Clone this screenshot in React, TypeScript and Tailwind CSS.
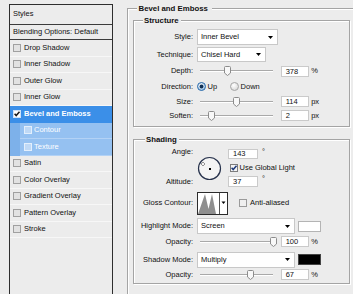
import React from "react";

function Box({
  checked = false,
  fill = "#e2e2e2",
  stroke = "#a0a0a0",
  mark = "#111",
}: {
  checked?: boolean;
  fill?: string;
  stroke?: string;
  mark?: string;
}) {
  return (
    <svg width="8" height="8" viewBox="0 0 8 8" className="shrink-0 block">
      <rect x="0.5" y="0.5" width="7" height="7" fill={fill} stroke={stroke} />
      {checked && (
        <path d="M1.6 3.8 L3.2 5.6 L6.5 1.8" fill="none" stroke={mark} strokeWidth="1.5" />
      )}
    </svg>
  );
}

type Kind = "normal" | "active" | "sub";

function StyleRow({ label, kind = "normal", checked = false }: { label: string; kind?: Kind; checked?: boolean }) {
  if (kind === "sub") {
    return (
      <div className="h-[16.5px] flex">
        <div className="w-[10px] bg-[#7db1ea]" />
        <div className="flex-1 bg-[#95c1f1] flex items-center pl-[4px] gap-[2px] text-white border-b border-[#b3d2f5]">
          <Box fill="#bfd9f6" stroke="#e3effc" />
          <span>{label}</span>
        </div>
      </div>
    );
  }
  if (kind === "active") {
    return (
      <div className="h-[16.5px] flex items-center pl-[3px] gap-[3px] bg-[#3b8fe8] text-white font-bold">
        <Box checked fill="#ffffff" stroke="#cfe2f8" mark="#1a1a1a" />
        <span>{label}</span>
      </div>
    );
  }
  return (
    <div className="h-[16.5px] flex items-center pl-[3px] gap-[3px] border-b border-[#f7f7f7]">
      <Box checked={checked} />
      <span>{label}</span>
    </div>
  );
}

function Arrow() {
  return (
    <svg width="5" height="3" viewBox="0 0 5 3" className="block shrink-0">
      <path d="M0 0 H5 L2.5 3 Z" fill="#000" />
    </svg>
  );
}

function Drop({ text, w, h = "h-[16px]" }: { text: string; w: string; h?: string }) {
  return (
    <div className={`${w} ${h} bg-white border border-[#c8c8c8] flex items-center justify-between pl-[3px] pr-[4px]`}>
      <span>{text}</span>
      <Arrow />
    </div>
  );
}

function Field({ v, w = "w-[28px]", h = "h-[11px]" }: { v: string; w?: string; h?: string }) {
  return (
    <div className={`${w} ${h} bg-white border border-[#cacaca] flex items-center pl-[4px] leading-none`}>{v}</div>
  );
}

function Slider({ pos }: { pos: number }) {
  return (
    <div className="relative w-[73px] h-[10px] ml-[3px] shrink-0">
      <div className="absolute left-0 right-0 top-[4px] h-px bg-[#a9a9a9]" />
      <div className="absolute left-0 right-0 top-[5px] h-px bg-white" />
      <svg
        className="absolute top-0 block"
        style={{ left: `${pos - 3.5}px` }}
        width="7"
        height="10"
        viewBox="0 0 7 10"
      >
        <path d="M1.5 0.5 H5.5 Q6.5 0.5 6.5 1.5 V7 L3.5 9.5 L0.5 7 V1.5 Q0.5 0.5 1.5 0.5 Z" fill="#f8f8f8" stroke="#8c8c8c" />
      </svg>
    </div>
  );
}

function Row({ h, label, children }: { h: string; label: string; children: React.ReactNode }) {
  return (
    <div className={`flex items-center ${h}`}>
      <div className="w-[59px] text-right shrink-0">{label}</div>
      <div className="ml-[4px] flex items-center">{children}</div>
    </div>
  );
}

function SliderRow({ h, label, pos, v, unit }: { h: string; label: string; pos: number; v: string; unit: string }) {
  return (
    <Row h={h} label={label}>
      <Slider pos={pos} />
      <div className="ml-[7.7px]">
        <Field v={v} />
      </div>
      <span className="ml-[2.5px]">{unit}</span>
    </Row>
  );
}

function Radio({ on }: { on: boolean }) {
  return (
    <svg width="9" height="9" viewBox="0 0 9 9" className="block shrink-0">
      <defs>
        <radialGradient id={on ? "rOn" : "rOff"} cx="0.4" cy="0.35" r="0.7">
          <stop offset="0" stopColor="#ffffff" />
          <stop offset="1" stopColor={on ? "#8fb9e2" : "#d6d6d6"} />
        </radialGradient>
      </defs>
      <circle cx="4.5" cy="4.5" r="4" fill={`url(#${on ? "rOn" : "rOff"})`} stroke={on ? "#2a6aa8" : "#a6a6a6"} />
      {on && <circle cx="4.5" cy="4.5" r="1.9" fill="#0e2f55" />}
    </svg>
  );
}

const group =
  "border border-[#a4a4a4] shadow-[inset_1px_1px_0_#ffffff,1px_1px_0_#ffffff] min-w-0";

export default function App() {
  return (
    <div className="w-[353px] h-[294px] overflow-hidden bg-[#ececec] text-[#111] text-[7.5px] leading-[10px] font-['Liberation_Sans',Arial,Helvetica,sans-serif] flex">
      {/* Left: style list */}
      <div className="ml-[9px] mt-[4px] w-[104px] h-[300px] shrink-0 border border-[#2e2e2e] bg-[#ececec]">
        <div className="h-[20px] flex items-center pl-[3px] pb-[2px] border-b border-[#3c3c3c]">Styles</div>
        <div className="h-[15px] flex items-center pl-[3px] border-b border-[#3c3c3c]">Blending Options: Default</div>
        <StyleRow label="Drop Shadow" />
        <StyleRow label="Inner Shadow" />
        <StyleRow label="Outer Glow" />
        <StyleRow label="Inner Glow" />
        <StyleRow label="Bevel and Emboss" kind="active" />
        <StyleRow label="Contour" kind="sub" />
        <StyleRow label="Texture" kind="sub" />
        <StyleRow label="Satin" />
        <StyleRow label="Color Overlay" />
        <StyleRow label="Gradient Overlay" />
        <StyleRow label="Pattern Overlay" />
        <StyleRow label="Stroke" />
      </div>

      {/* Right: Bevel and Emboss */}
      <fieldset className={`${group} ml-[14px] mt-[3px] w-[240px] h-[310px] shrink-0 pl-[5px] pt-[1px]`}>
        <legend className="ml-[4px] pl-[1.5px] pr-[4px] font-bold text-[7.8px] leading-[11px] bg-[#ececec]">
          Bevel and Emboss
        </legend>

        <fieldset className={`${group} w-[217px] pt-[2.3px] pb-[4px]`}>
          <legend className="ml-[8.5px] pl-[1.5px] pr-[2.5px] font-bold text-[7.8px] leading-[11px] bg-[#ececec]">
            Structure
          </legend>
          <Row h="h-[18px]" label="Style:">
            <Drop text="Inner Bevel" w="w-[81px]" />
          </Row>
          <Row h="h-[17px]" label="Technique:">
            <Drop text="Chisel Hard" w="w-[69px]" h="h-[15px]" />
          </Row>
          <SliderRow h="h-[16px]" label="Depth:" pos={27.5} v="378" unit="%" />
          <Row h="h-[15px]" label="Direction:">
            <Radio on />
            <span className="ml-[1.5px]">Up</span>
            <div className="ml-[13px]">
              <Radio on={false} />
            </div>
            <span className="ml-[1.5px]">Down</span>
          </Row>
          <SliderRow h="h-[15px]" label="Size:" pos={36.7} v="114" unit="px" />
          <SliderRow h="h-[13px]" label="Soften:" pos={11} v="2" unit="px" />
        </fieldset>

        <fieldset className={`${group} w-[217px] mt-[6.5px] pt-[2.5px] pb-[1.5px]`}>
          <legend className="ml-[10.5px] pl-[1.5px] pr-[2.5px] font-bold text-[7.8px] leading-[11px] bg-[#ececec]">
            Shading
          </legend>

          <div className="flex h-[41px]">
            <div className="w-[59px] shrink-0 flex flex-col justify-between items-end">
              <span>Angle:</span>
              <span className="mb-[1px]">Altitude:</span>
            </div>
            <div className="ml-[4px] self-center mt-[1px]">
              <svg width="25" height="25" viewBox="0 0 25 25" className="block">
                <circle cx="12.5" cy="12.5" r="11" fill="#f4f4f4" stroke="#27324c" strokeWidth="1.2" />
                <rect x="5.5" y="6" width="1" height="1" fill="#333" />
                <rect x="5.5" y="9" width="1" height="1" fill="#333" />
                <rect x="4" y="7.5" width="1" height="1" fill="#333" />
                <rect x="7" y="7.5" width="1" height="1" fill="#333" />
                <rect x="12" y="12" width="2" height="2" fill="#000" />
              </svg>
            </div>
            <div className="ml-[6px] flex flex-col justify-between">
              <div className="flex items-start mt-[1.5px]">
                <Field v="143" w="w-[30px]" h="h-[10px]" />
                <span className="ml-[4px] -mt-[2px]">°</span>
              </div>
              <div className="flex items-center ml-[1.5px]">
                <Box checked fill="#f4f4f4" stroke="#7c7c7c" mark="#1d3a7a" />
                <span className="ml-[2px]">Use Global Light</span>
              </div>
              <div className="flex items-start mb-[1px]">
                <Field v="37" w="w-[30px]" h="h-[11px]" />
                <span className="ml-[4px] -mt-[2px]">°</span>
              </div>
            </div>
          </div>

          <div className="mt-[3.3px]">
            <Row h="h-[23px]" label="Gloss Contour:">
              <svg width="31" height="23" viewBox="0 0 31 23" className="block">
                <rect x="0.5" y="0.5" width="30" height="22" fill="#ffffff" stroke="#2b2b2b" />
                <path d="M1 22 L8 2 L11.5 17 L15 2 L19 22 Z" fill="#8f8f8f" />
                <line x1="22.5" y1="1" x2="22.5" y2="22" stroke="#555" />
                <path d="M24.5 9.5 H28.5 L26.5 12 Z" fill="#000" />
              </svg>
              <div className="ml-[11px]">
                <Box fill="#efefef" stroke="#9a9a9a" />
              </div>
              <span className="ml-[3px]">Anti-aliased</span>
            </Row>
          </div>

          <div className="mt-[3.5px]">
            <Row h="h-[16px]" label="Highlight Mode:">
              <Drop text="Screen" w="w-[98px]" />
              <div className="ml-[3.3px] w-[23px] h-[11px] bg-white border border-[#b4b4b4]" />
            </Row>
          </div>
          <SliderRow h="h-[15px]" label="Opacity:" pos={73} v="100" unit="%" />
          <div className="mt-[2.5px]">
            <Row h="h-[16px]" label="Shadow Mode:">
              <Drop text="Multiply" w="w-[98px]" />
              <div className="ml-[3.3px] w-[23px] h-[11px] bg-black border border-[#444]" />
            </Row>
          </div>
          <SliderRow h="h-[14px]" label="Opacity:" pos={50} v="67" unit="%" />
        </fieldset>
      </fieldset>
    </div>
  );
}
